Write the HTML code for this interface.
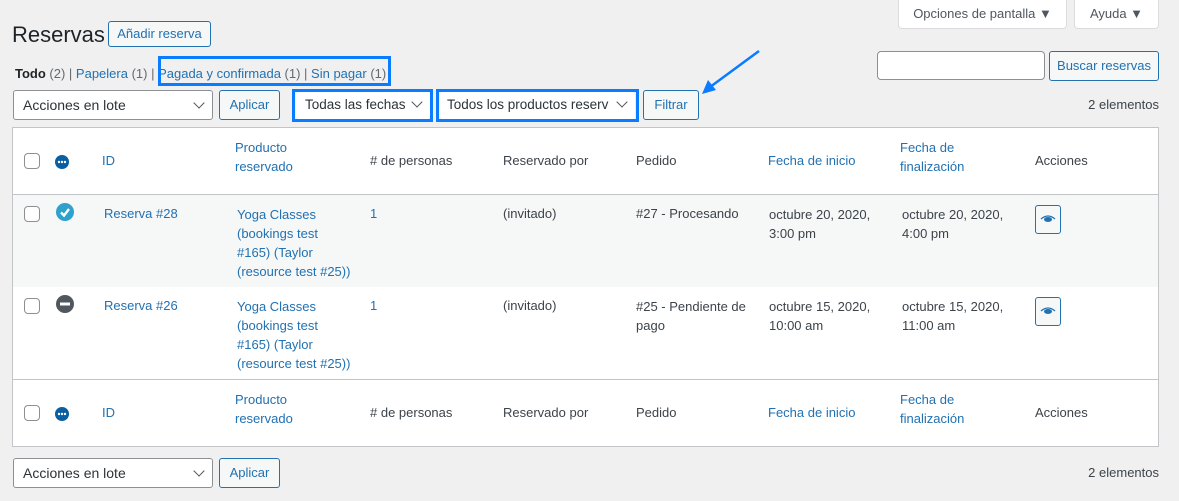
<!DOCTYPE html>
<html><head><meta charset="utf-8"><style>
*{box-sizing:border-box;margin:0;padding:0}
body{width:1179px;height:501px;background:#f0f0f1;font-family:"Liberation Sans",sans-serif;font-size:13px;color:#3c434a;position:relative;overflow:hidden}
.a{position:absolute;white-space:nowrap}
.l{color:#2271b1}
.btn{position:absolute;border:1px solid #2271b1;border-radius:3px;background:#f6f7f7;color:#2271b1;text-align:center;font-size:13px}
.sel{position:absolute;border:1px solid #8c8f94;border-radius:3px;background:#fff;color:#2c3338;font-size:14px;padding-left:9px}
.chev{position:absolute;right:9px;top:8px;width:8px;height:8px;border-right:1.6px solid #50575e;border-bottom:1.6px solid #50575e;transform:rotate(45deg)}
.hl{position:absolute;border:3px solid #0a7cff}
.cb{position:absolute;width:16px;height:16px;border:1px solid #8c8f94;border-radius:4px;background:#fff}
.tab{position:absolute;top:0;height:29px;background:#fff;border:1px solid #dcdcde;border-top:none;border-radius:0 0 4px 4px;color:#50575e;font-size:13px;line-height:28px;text-align:center}
.eye{position:absolute;width:26px;height:29px;border:1px solid #2271b1;border-radius:3px;background:#f6f7f7}
</style></head><body>
<div class="tab" style="left:898px;width:169px">Opciones de pantalla &#9660;</div>
<div class="tab" style="left:1074px;width:85px">Ayuda &#9660;</div>

<div class="a" style="left:12px;top:22px;font-size:22px;color:#1d2327">Reservas</div>
<div class="btn" style="left:108px;top:21px;width:103px;height:26px;line-height:24px">Añadir reserva</div>

<div class="a" style="left:15px;top:66px;color:#646970"><b style="color:#1d2327;font-weight:600">Todo</b> (2) | <span class="l">Papelera</span> (1) | <span class="l">Pagada y confirmada</span> (1) | <span class="l">Sin pagar</span> (1)</div>
<div class="hl" style="left:158px;top:56px;width:233px;height:30px"></div>

<div style="position:absolute;left:877px;top:51px;width:168px;height:29px;background:#fff;border:1px solid #8c8f94;border-radius:4px"></div>
<div class="btn" style="left:1049px;top:51px;width:110px;height:30px;line-height:28px">Buscar reservas</div>

<div class="sel" style="left:13px;top:90px;width:200px;height:30px;line-height:28px">Acciones en lote<div class="chev"></div></div>
<div class="btn" style="left:219px;top:90px;width:61px;height:30px;line-height:28px">Aplicar</div>
<div class="sel" style="left:296px;top:92px;width:134px;height:27px;line-height:25px;border:none;font-size:13.5px">Todas las fechas<div class="chev" style="top:6px"></div></div>
<div class="hl" style="left:292px;top:89px;width:141px;height:33px"></div>
<div class="sel" style="left:440px;top:92px;width:195px;height:27px;line-height:25px;border:none;padding-left:7px;overflow:hidden;font-size:13.5px">Todos los productos reserv<div class="chev" style="top:6px"></div></div>
<div class="hl" style="left:436px;top:89px;width:203px;height:33px"></div>
<div class="btn" style="left:643px;top:90px;width:56px;height:30px;line-height:28px">Filtrar</div>
<svg class="a" style="left:700px;top:48px" width="62" height="48"><path d="M59 3 L6 42" stroke="#0a7cff" stroke-width="2.5"/><path d="M2 46 L8 32 L16 42 Z" fill="#0a7cff"/></svg>
<div class="a" style="right:20px;top:97px;color:#3c434a">2 elementos</div>

<div style="position:absolute;left:12px;top:127px;width:1147px;height:320px;background:#fff;border:1px solid #c3c4c7">
<div style="position:absolute;left:0;top:66px;width:1145px;height:1px;background:#c3c4c7"></div>
<div style="position:absolute;left:0;top:67px;width:1145px;height:92px;background:#f6f7f7"></div>
<div style="position:absolute;left:0;top:251px;width:1145px;height:1px;background:#c3c4c7"></div>
</div>

<div class="cb" style="left:24px;top:153px"></div>
<svg class="a" style="left:54px;top:154px" width="16" height="16"><circle cx="8" cy="8" r="7" fill="#0a5fa0"/><circle cx="5" cy="8" r="1.2" fill="#fff"/><circle cx="8" cy="8" r="1.2" fill="#fff"/><circle cx="11" cy="8" r="1.2" fill="#fff"/></svg>
<div class="a l" style="left:102px;top:153px">ID</div>
<div class="a l" style="left:235px;top:138px;line-height:19px">Producto<br>reservado</div>
<div class="a" style="left:370px;top:153px">#  de personas</div>
<div class="a" style="left:503px;top:153px">Reservado por</div>
<div class="a" style="left:636px;top:153px">Pedido</div>
<div class="a l" style="left:768px;top:153px">Fecha de inicio</div>
<div class="a l" style="left:900px;top:138px;line-height:19px">Fecha de<br>finalización</div>
<div class="a" style="left:1035px;top:153px">Acciones</div>

<div class="cb" style="left:24px;top:206px"></div>
<svg class="a" style="left:56px;top:203px" width="18" height="18"><circle cx="9" cy="9" r="9" fill="#2ea2cc"/><path d="M5 9.5 L8 12.5 L13 6" stroke="#fff" stroke-width="2.4" fill="none"/></svg>
<div class="a l" style="left:104px;top:206px">Reserva #28</div>
<div class="a l" style="left:237px;top:205px;line-height:19px">Yoga Classes<br>(bookings test<br>#165) (Taylor<br>(resource test #25))</div>
<div class="a l" style="left:370px;top:206px">1</div>
<div class="a" style="left:503px;top:206px">(invitado)</div>
<div class="a" style="left:636px;top:206px">#27 - Procesando</div>
<div class="a" style="left:769px;top:205px;line-height:19px">octubre 20, 2020,<br>3:00 pm</div>
<div class="a" style="left:902px;top:205px;line-height:19px">octubre 20, 2020,<br>4:00 pm</div>
<div class="eye" style="left:1035px;top:205px"><svg width="24" height="27"><path d="M5 13 Q12 7 19 13" stroke="#2271b1" stroke-width="1.2" fill="none"/><ellipse cx="12" cy="13.5" rx="4" ry="2.5" fill="#2271b1"/></svg></div>

<div class="cb" style="left:24px;top:298px"></div>
<svg class="a" style="left:56px;top:295px" width="18" height="18"><circle cx="9" cy="9" r="9" fill="#50575e"/><rect x="4" y="7.5" width="10" height="3" fill="#fff"/></svg>
<div class="a l" style="left:104px;top:298px">Reserva #26</div>
<div class="a l" style="left:237px;top:297px;line-height:19px">Yoga Classes<br>(bookings test<br>#165) (Taylor<br>(resource test #25))</div>
<div class="a l" style="left:370px;top:298px">1</div>
<div class="a" style="left:503px;top:298px">(invitado)</div>
<div class="a" style="left:636px;top:297px;line-height:19px">#25 - Pendiente de<br>pago</div>
<div class="a" style="left:769px;top:297px;line-height:19px">octubre 15, 2020,<br>10:00 am</div>
<div class="a" style="left:902px;top:297px;line-height:19px">octubre 15, 2020,<br>11:00 am</div>
<div class="eye" style="left:1035px;top:297px"><svg width="24" height="27"><path d="M5 13 Q12 7 19 13" stroke="#2271b1" stroke-width="1.2" fill="none"/><ellipse cx="12" cy="13.5" rx="4" ry="2.5" fill="#2271b1"/></svg></div>

<div class="cb" style="left:24px;top:405px"></div>
<svg class="a" style="left:54px;top:406px" width="16" height="16"><circle cx="8" cy="8" r="7" fill="#0a5fa0"/><circle cx="5" cy="8" r="1.2" fill="#fff"/><circle cx="8" cy="8" r="1.2" fill="#fff"/><circle cx="11" cy="8" r="1.2" fill="#fff"/></svg>
<div class="a l" style="left:102px;top:405px">ID</div>
<div class="a l" style="left:235px;top:390px;line-height:19px">Producto<br>reservado</div>
<div class="a" style="left:370px;top:405px">#  de personas</div>
<div class="a" style="left:503px;top:405px">Reservado por</div>
<div class="a" style="left:636px;top:405px">Pedido</div>
<div class="a l" style="left:768px;top:405px">Fecha de inicio</div>
<div class="a l" style="left:900px;top:390px;line-height:19px">Fecha de<br>finalización</div>
<div class="a" style="left:1035px;top:405px">Acciones</div>

<div class="sel" style="left:13px;top:458px;width:200px;height:30px;line-height:28px">Acciones en lote<div class="chev"></div></div>
<div class="btn" style="left:219px;top:458px;width:61px;height:30px;line-height:28px">Aplicar</div>
<div class="a" style="right:20px;top:465px">2 elementos</div>
</body></html>
